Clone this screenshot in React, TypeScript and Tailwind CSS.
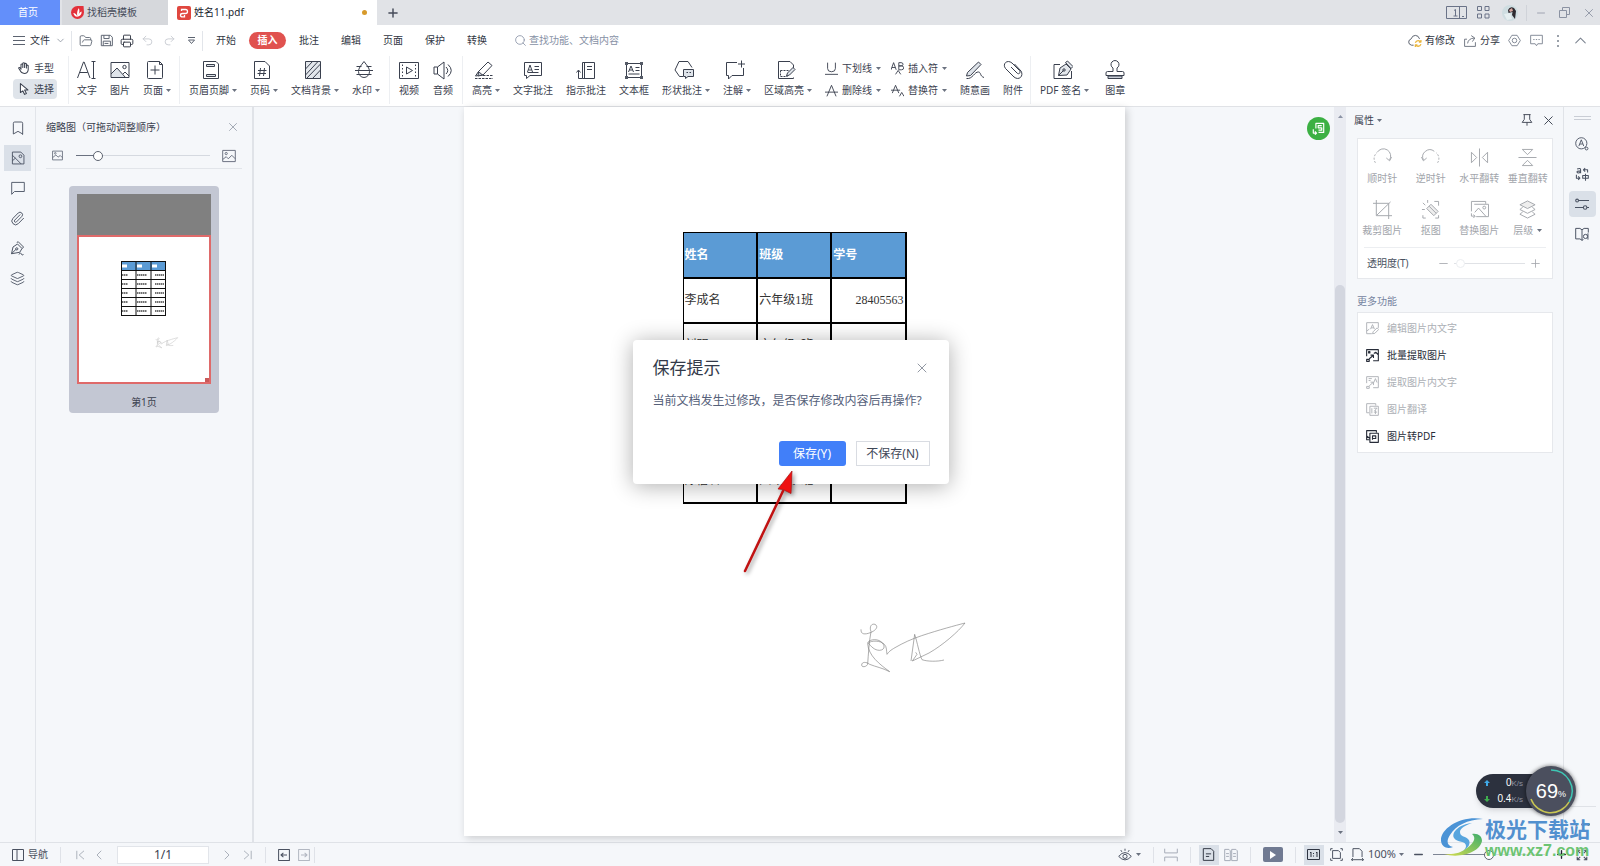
import { type ReactNode, useState } from 'react';
import {
  Bookmark,
  ChevronDown,
  ChevronLeft,
  ChevronRight,
  ChevronUp,
  FolderOpen,
  Layers,
  Minus,
  Paperclip,
  Plus,
  Printer,
  Redo2,
  Search,
  Undo2,
  X,
} from 'lucide-react';

type IconProps = {
  children: ReactNode;
  className?: string;
};

// All hand-drawn icons share a 20x20 grid.
function Icon({ children, className = 'size-5' }: IconProps) {
  return (
    <svg
      viewBox="0 0 20 20"
      className={`shrink-0 ${className}`}
      fill="none"
      stroke="currentColor"
      strokeLinejoin="round"
      aria-hidden="true"
    >
      {children}
    </svg>
  );
}

function Caret() {
  return (
    <svg viewBox="0 0 5 3" className="h-[3px] w-[5px] shrink-0" fill="#6b7280" aria-hidden="true">
      <path d="M0 0h5L2.5 3z" />
    </svg>
  );
}

function Divider() {
  return <span className="h-4 w-px shrink-0 bg-[#dfe2e8]" />;
}

type Tool = {
  label: string;
  caret?: boolean;
  icon: ReactNode;
};

const pageTools: Tool[] = [
  {
    label: '文字',
    icon: <path d="M.5 18 6.5 2h.6L13 18M2.800 12.5h8M14.500 1.5h4M16.500 1.5v17M14.500 18.500h4" />,
  },
  {
    label: '图片',
    icon: (
      <>
        <path d="M1.500 13 7 8l8 9.500H1.500z" fill="#dfe4ea" stroke="none" />
        <path d="M1 2.500h18v15H1zM1 14l6-6 8.500 9.500M13 14l2-2 4 4" />
        <circle cx="14.500" cy="7" r="1.700" />
      </>
    ),
  },
  {
    label: '页面',
    caret: true,
    icon: (
      <>
        <path d="M2.500 2.500q0-1 1-1h11l3 3v13q0 1-1 1h-13q-1 0-1-1zM14.500 1.500v3h3" />
        <path d="M10 5.500v9M5.500 10h9" />
      </>
    ),
  },
];

const layoutTools: Tool[] = [
  {
    label: '页眉页脚',
    caret: true,
    icon: (
      <>
        <path d="M2.500 1.500h12.500l2.500 2.500v14.500h-15z" />
        <path d="M5.500 4.500h8v2h-8zM5.500 14.500h9v2h-9z" fill="#dfe4ea" />
      </>
    ),
  },
  {
    label: '页码',
    caret: true,
    icon: (
      <>
        <path d="M2.500 1.500h10.500l4.500 4.500v12.500h-15z" />
        <path d="m8.500 8-1 8M12.500 8l-1 8M6 10.500h8.500M5.500 13.500h8.500" />
      </>
    ),
  },
  {
    label: '文档背景',
    caret: true,
    icon: (
      <>
        <path d="M2.500 1.500h15v17h-15z" fill="#e3e7ec" />
        <path d="m2.500 9 7-7.500M2.500 15 15 1.500M3.500 18.500l14-14.500M9.500 18.500l8-8.500" />
      </>
    ),
  },
  {
    label: '水印',
    caret: true,
    icon: (
      <>
        <path d="M10 1.500c3 4 5.500 6.500 5.500 10a5.500 6 0 0 1-11 0c0-3.500 2.500-6 5.500-10z" />
        <path d="M2.500 6.500h5M12.500 6.500h5M1 10.500h18M2.500 14.500h15" />
      </>
    ),
  },
];

const mediaTools: Tool[] = [
  {
    label: '视频',
    icon: (
      <>
        <path d="M.500 2.500h19v16H.500zM7.500 7v7l6-3.500z" />
        <path d="M3.500 4.500v12M16.500 4.500v12" strokeDasharray="1.500 2" />
      </>
    ),
  },
  {
    label: '音频',
    icon: (
      <path d="M1 7h3.500L11 2v17l-6.500-5H1zM4.500 7v7M13 7q3.500 3.500 0 7M15 4.500q6.500 6 0 12" />
    ),
  },
];

const markTools: Tool[] = [
  {
    label: '高亮',
    caret: true,
    icon: (
      <>
        <path d="M4.500 11.500 14 2l4 3.500-9 9.500-4.500-.500zM4.500 11.500 1.500 16l7-1" />
        <path d="m4.500 11.500 4 3.500L4 16z" fill="#c9ced8" />
        <path d="M1 18.500h18M9 15.500h10" strokeDasharray="2.500 1" />
      </>
    ),
  },
  {
    label: '文字批注',
    icon: (
      <path d="M1.500 2.500h17v13H7L3.500 18.500v-3h-2zM4.500 12l2.500-7 2.500 7M5.500 10h3M11.500 6.500h4.500M11.500 9.500h4.500M4.500 12.500h11" />
    ),
  },
  {
    label: '指示批注',
    icon: <path d="M6.500 2.500h12v16h-12zM8.500 2.500v16M11 6.500h5M11 9.500h5M6.500 18.500h-4v-8M.500 12.500l2-2.500 2 2.500" />,
  },
  {
    label: '文本框',
    icon: (
      <>
        <path d="M2.500 3.500h15v14h-15zM4.500 12 7 6l2.500 6M5.500 10h3M11.500 7.500h4M11.500 10.500h4M4.500 14h11" />
        <path
          d="M1 2h3v3H1zM16 2h3v3h-3zM1 16h3v3H1zM16 16h3v3h-3z"
          fill="#555b67"
          stroke="none"
        />
      </>
    ),
  },
  {
    label: '形状批注',
    caret: true,
    icon: (
      <>
        <path d="M9 16.500H5.500L1 10l4-8.500h9l4 6" />
        <path d="M9.500 9.500h10v7H14L11.500 18.500v-2h-2z" fill="#dfe4ea" />
        <path d="M12.500 12.500h1.500M15.500 12.500h1.500" />
      </>
    ),
  },
  {
    label: '注解',
    caret: true,
    icon: <path d="M12 2.500H1.500v13h2v3.500L7 15.500h11.500V8M16.500 .500v7M13 4h7" />,
  },
  {
    label: '区域高亮',
    caret: true,
    icon: (
      <>
        <path d="M17.500 8V5L14 1.500H2.500v17h15v-1" />
        <path d="M4.500 10.500h8M4.500 10.500v6h7" strokeDasharray="2 1" />
        <path d="m10.500 16 1-3L17 7.500l2 2-5.500 5.500z" fill="#dfe4ea" />
      </>
    ),
  },
];

const drawTools: Tool[] = [
  {
    label: '随意画',
    icon: (
      <>
        <path d="m2.500 12.500 11-10.500 2.500 2.500-10.500 11-4 .500z" fill="#dfe4ea" />
        <path d="M1.500 18.500c6 1 8-7 12-6.500 3 .500 1 4 5.500 5.500" />
      </>
    ),
  },
  {
    label: '附件',
    icon: (
      <path d="m8 7 6 6c2 2 4-.500 2.500-2.500L9 3C4 -1-1 4 2.500 8.500l8.500 8.500c5 4 10-1 7-6L11.500 4" />
    ),
  },
];

const signTools: Tool[] = [
  {
    label: 'PDF 签名',
    caret: true,
    icon: (
      <>
        <path d="M7 4.500H1v14h17.500V11" />
        <path d="M5.500 15.500 7 8l6-4 5 5-4 6zM12.500 2.500 14.500 1 20 6.500 18 8.500z" fill="#e3e7ec" />
        <path d="m5.500 15.500 5-5" />
        <circle cx="11" cy="10" r="1.200" />
      </>
    ),
  },
  {
    label: '图章',
    icon: (
      <>
        <path d="M3 16h14v2.500H3z" fill="#c9ced8" />
        <path d="M8 11.500V8a4 4 0 1 1 4 0v3.500h5.500q1.500 0 1.500 1.500v2.500H1V13q0-1.500 1.500-1.500z" />
      </>
    ),
  },
];

function ToolButton({ tool }: { tool: Tool }) {
  return (
    <button type="button" className="flex flex-col items-start gap-[3px]">
      <span className={tool.caret ? 'flex w-full justify-center pr-1' : 'flex w-full justify-center'}>
        <Icon>{tool.icon}</Icon>
      </span>
      <span className="flex h-[14px] items-center gap-[3px] whitespace-nowrap">
        {tool.label}
        {tool.caret ? <Caret /> : null}
      </span>
    </button>
  );
}

function SmallTool({ tool }: { tool: Tool }) {
  return (
    <button type="button" className="flex h-[22px] items-center gap-1 whitespace-nowrap">
      <Icon className="size-[13px]">{tool.icon}</Icon>
      {tool.label}
      <Caret />
    </button>
  );
}

const lineTools: Tool[] = [
  { label: '下划线', icon: <path strokeWidth="1.400" d="M4 1v9q0 5 6 5t6-5V1M0 19h20" /> },
  { label: '删除线', icon: <path strokeWidth="1.400" d="M3 19 10 2l7 17M0 12.500h20" /> },
];

const caretTools: Tool[] = [
  {
    label: '插入符',
    icon: (
      <path
        strokeWidth="1.400"
        d="m0 12 4-11 4 11M1.500 8.500h5M12 1h3.500q3 0 3 2.500t-3 2.500H12zM12 6h4q3.500 0 3.500 3t-3.500 3h-4zM7 19l4-6 4 6"
      />
    ),
  },
  {
    label: '替换符',
    icon: <path strokeWidth="1.400" d="m2 14 5-12 5 12M0 9.500h14M13 19l3.500-6 3.500 6" />,
  },
];

function TitleBar() {
  return (
    <header className="flex h-[25px] shrink-0 items-stretch bg-[#e1e3e7] text-[#454b59]">
      <button type="button" className="w-[60px] bg-[#638ffa] pr-1 text-white">
        首页
      </button>
      <button type="button" className="ml-0.5 flex w-[106px] items-center gap-[3px] bg-[#d6d8dc] pl-[9px]">
        <svg viewBox="0 0 14 14" className="size-[13px]" aria-hidden="true">
          <path d="M7 0h6.500L14 7a7 7 0 1 1-7-7z" fill="#e3313b" />
          <path
            d="M7 11.500C6 8 7 4 8.500 2.500c1 2.500.500 5-.500 7 1-2 2-3 3.500-3.500 0 3-1.500 5-4.500 5.500-3 0-4-2-4.500-4 2 .300 3.500 1.500 4.500 4z"
            fill="#fff"
          />
        </svg>
        找稻壳模板
      </button>
      <button type="button" className="flex w-[209px] items-center gap-[3px] bg-white pr-[10px] pl-[9px] text-[#20242e]">
        <svg viewBox="0 0 14 14" className="size-[14px]" aria-hidden="true">
          <rect width="14" height="14" rx="2" fill="#e0473f" />
          <path
            d="M4.500 5V3.500h4q2 0 2 2t-2 2H5.500q-2 0-2 1.700t2 1.700h2V9"
            fill="none"
            stroke="#fff"
            strokeWidth="1.300"
          />
        </svg>
        姓名11.pdf
        <span className="ml-auto size-[5px] rounded-full bg-[#d79a2b]" />
      </button>
      <button type="button" aria-label="新建标签" className="flex w-[31px] items-center justify-center">
        <Plus size={14} strokeWidth={2.5} />
      </button>
      <div className="ml-auto flex items-center pr-1 text-[#6a7388]">
        <svg viewBox="0 0 21 13" className="h-[13px] w-[21px]" fill="none" stroke="currentColor" aria-hidden="true">
          <path d="M.500.500h20v12H.500zM13.500 1v11M8 4.500l1.500-1V10M7.500 10h4M16 10.500h2" />
        </svg>
        <button type="button" aria-label="应用" className="ml-2.5">
          <svg viewBox="0 0 13 13" className="size-[13px]" fill="none" stroke="currentColor" aria-hidden="true">
            <path d="M.500.500h4v4h-4zM8 .500h4v4H8zM.500 8h4v4h-4zM8 8h4v4H8z" />
          </svg>
        </button>
        <svg viewBox="0 0 16 16" className="ml-3 size-4" aria-hidden="true">
          <circle cx="8" cy="8" r="8" fill="#cfdde1" />
          <path d="M6 5q2-4 6-2l2 3-1 8-3-4 .500-3-4 1z" fill="#2e2a30" />
          <path d="m7 5 3-2 1 3-3 1z" fill="#d8a7a0" />
          <path d="m2 9 6-1 2 6-5 1z" fill="#e6eff1" />
        </svg>
        <span className="ml-2 h-4 w-px bg-[#d0d3d9]" />
        <div className="ml-2 flex items-center gap-3 text-[#8b92a2]">
          <button type="button" aria-label="最小化">
            <Minus size={12} strokeWidth={1.5} />
          </button>
          <button type="button" aria-label="还原">
            <svg viewBox="0 0 11 11" className="size-[11px]" fill="none" stroke="currentColor" aria-hidden="true">
              <path d="M.500 3.500h7v7h-7zM3.500 3.500v-3h7v7h-3" />
            </svg>
          </button>
          <button type="button" aria-label="关闭">
            <X size={14} strokeWidth={1.5} />
          </button>
        </div>
      </div>
    </header>
  );
}

const menuTabs = ['批注', '编辑', '页面', '保护', '转换'];

function MenuRow() {
  return (
    <nav className="flex h-[31px] shrink-0 items-center bg-white pr-2.5 pl-[13px] text-[#2f3542]">
      <button type="button" className="flex items-center">
        <svg viewBox="0 0 12 9" className="h-[9px] w-3" stroke="#5c6370" aria-hidden="true">
          <path d="M0 .500h12M0 4.500h12M0 8.500h12" />
        </svg>
        <span className="ml-[5px]">文件</span>
        <ChevronDown size={11} strokeWidth={1.8} className="ml-[5px] text-[#8d94a0]" />
      </button>
      <span className="mr-[7px] ml-[5px] h-5 w-px bg-[#e2e5ea]" />
      <div className="flex items-center gap-[7px] text-[#5c6370]">
        <button type="button" aria-label="打开">
          <FolderOpen size={14} strokeWidth={1.5} />
        </button>
        <button type="button" aria-label="保存">
          <Icon className="size-[13px]">
            <path strokeWidth="1.500" d="M2 2h14l3 3v13H2zM6 2v5h8V2M5 18v-7h11v7M7 14.500h6" />
          </Icon>
        </button>
        <button type="button" aria-label="打印" className="text-[#2f3542]">
          <Printer size={14} strokeWidth={1.6} />
        </button>
        <button type="button" aria-label="撤销" className="text-[#c5c9d0]">
          <Undo2 size={13} strokeWidth={1.6} />
        </button>
        <button type="button" aria-label="恢复" className="ml-0.5 text-[#c5c9d0]">
          <Redo2 size={13} strokeWidth={1.6} />
        </button>
        <button type="button" aria-label="自定义快速访问工具栏" className="ml-[5px]">
          <svg viewBox="0 0 7 7" className="size-[7px]" fill="none" stroke="currentColor" aria-hidden="true">
            <path d="M0 .500h7M.500 3 3.500 6.500 6.500 3z" />
          </svg>
        </button>
      </div>
      <span className="mr-[13px] ml-[7px] h-5 w-px bg-[#e2e5ea]" />
      <button type="button">开始</button>
      <button type="button" className="ml-[13px] h-[17px] w-[37px] rounded-full bg-[#e0524f] font-bold text-white">
        插入
      </button>
      <div className="ml-[13px] flex gap-[22px]">
        {menuTabs.map((tab) => (
          <button key={tab} type="button">
            {tab}
          </button>
        ))}
      </div>
      <label className="ml-[27px] flex items-center gap-0.5 text-[#8791a5]">
        <Search size={13} strokeWidth={1.5} />
        <input
          type="text"
          aria-label="查找功能"
          placeholder="查找功能、文档内容"
          className="w-28 bg-transparent outline-none placeholder:text-[#8791a5]"
        />
      </label>
      <div className="ml-auto flex items-center text-[#2f3542]">
        <button type="button" className="flex items-center gap-[3px]">
          <Icon className="size-[14px]">
            <path strokeWidth="1.400" stroke="#5c6370" d="M8 16H5q-4-1-4-4.500T4.500 7Q6 2 10.500 2t6 5" />
            <path
              strokeWidth="1.800"
              stroke="#e9b53c"
              d="M10.500 12.500q1-3 4-3 2.500 0 3.500 2M18.500 8.500v3h-3M18.500 14.500q-1 3-4 3-2.500 0-3.500-2M10.500 18.500v-3h3"
            />
          </Icon>
          有修改
        </button>
        <button type="button" className="ml-[9px] flex items-center gap-1">
          <Icon className="size-3 text-[#5c6370]">
            <path strokeWidth="1.400" d="M5 7H1v12h18v-7M6 14q1-8 11-9M12 1l6 4-4 6" />
          </Icon>
          分享
        </button>
        <div className="ml-2 flex items-center text-[#7b828f]">
          <button type="button" aria-label="设置">
            <Icon className="size-[13px]">
              <path strokeWidth="1.400" d="M6 2h8l1.500 2.500 3.500 5.500-3.500 5.500L14 18H6l-1.500-2.500L1 10l3.500-5.500z" />
              <circle cx="10" cy="10" r="3.500" strokeWidth="1.400" />
            </Icon>
          </button>
          <button type="button" aria-label="反馈" className="ml-[9px]">
            <Icon className="size-[13px]">
              <path strokeWidth="1.400" d="M1 2h18v13h-7l-2 3-2-3H1zM5 8.500h2M9 8.500h2M13 8.500h2" />
            </Icon>
          </button>
          <button type="button" aria-label="更多" className="ml-3.5">
            <svg viewBox="0 0 2 12" className="h-3 w-0.5" fill="currentColor" aria-hidden="true">
              <path d="M.250 0h1.500v2H.250zM.250 5h1.500v2H.250zM.250 10h1.500v2H.250z" />
            </svg>
          </button>
          <button type="button" aria-label="收起功能区" className="ml-3">
            <ChevronUp size={19} strokeWidth={1.3} />
          </button>
        </div>
      </div>
    </nav>
  );
}

function Ribbon() {
  return (
    <div className="flex h-[51px] shrink-0 items-start border-b border-[#e0e2e6] bg-white text-[#3a404e]">
      <div className="ml-[13px] flex w-11 flex-col pt-px">
        <button type="button" className="flex h-[22px] items-center gap-1 pl-[5px]">
          <Icon className="size-3">
            <path
              strokeWidth="1.700"
              d="M5 11V4q1.500-1.500 3 0v5-7q1.500-1.500 3 0v7-6q1.500-1.500 3 0v7-4q1.500-1.500 3 0v7q-1 6-6.500 6-5 0-7-5l-2.500-4q1-2 3 0l1 2z"
            />
          </Icon>
          手型
        </button>
        <button type="button" className="flex h-5 items-center gap-1 rounded-sm bg-[#dfe4ea] pl-[5px]">
          <Icon className="size-3">
            <path strokeWidth="1.700" d="M4 1v15l4-3 3 6 3-1.500-3-6h5.500z" fill="#fff" />
          </Icon>
          选择
        </button>
      </div>
      <div className="ml-[11px] flex h-12 gap-[13px] border-l border-[#edeff2] px-2 pt-1">
        {pageTools.map((tool) => (
          <ToolButton key={tool.label} tool={tool} />
        ))}
      </div>
      <div className="flex h-12 gap-[13px] border-l border-[#edeff2] px-[9px] pt-1">
        {layoutTools.map((tool) => (
          <ToolButton key={tool.label} tool={tool} />
        ))}
      </div>
      <div className="flex h-12 gap-[14px] border-l border-[#edeff2] px-[9px] pt-1">
        {mediaTools.map((tool) => (
          <ToolButton key={tool.label} tool={tool} />
        ))}
      </div>
      <div className="flex h-12 gap-[13px] border-l border-[#edeff2] pr-[7px] pl-[9px] pt-1">
        {markTools.map((tool) => (
          <ToolButton key={tool.label} tool={tool} />
        ))}
        <div className="-mt-1 flex gap-[10px] pt-px">
          <div className="flex flex-col">
            {lineTools.map((tool) => (
              <SmallTool key={tool.label} tool={tool} />
            ))}
          </div>
          <div className="flex flex-col">
            {caretTools.map((tool) => (
              <SmallTool key={tool.label} tool={tool} />
            ))}
          </div>
        </div>
        {drawTools.map((tool) => (
          <ToolButton key={tool.label} tool={tool} />
        ))}
      </div>
      <div className="flex h-12 gap-4 border-l border-[#edeff2] px-[9px] pt-1">
        {signTools.map((tool) => (
          <ToolButton key={tool.label} tool={tool} />
        ))}
      </div>
    </div>
  );
}

const railItems = [
  { label: '书签', icon: <Bookmark size={16} strokeWidth={1.4} /> },
  {
    label: '缩略图',
    icon: (
      <Icon className="size-[14px]">
        <path strokeWidth="1.300" d="M2 1.500h12l4.500 4.500v12.500H2zM2 6l12.500 12.500M2 14l4.500-4" />
        <circle cx="13.500" cy="7.500" r="2" strokeWidth="1.300" />
      </Icon>
    ),
  },
  {
    label: '批注',
    icon: (
      <Icon className="size-[14px]">
        <path strokeWidth="1.300" d="M1 2h18v13H5l-4 4z" />
      </Icon>
    ),
  },
  { label: '附件', icon: <Paperclip size={15} strokeWidth={1.5} /> },
  {
    label: '签名',
    icon: (
      <Icon className="size-[15px]">
        <path strokeWidth="1.300" d="M2 17 4 8l6-4 6 6-3 5zM9 2l2-1 7 7-1.500 2M2 17l6-6M12 18q2-4 3-1t3 1" />
        <circle cx="9" cy="10.500" r="1.500" strokeWidth="1.300" />
      </Icon>
    ),
  },
  { label: '图层', icon: <Layers size={15} strokeWidth={1.4} /> },
];

function LeftRail() {
  return (
    <div className="flex w-9 shrink-0 flex-col items-center gap-1 border-r border-[#e2e5ea] pt-2 text-[#4a5262]">
      {railItems.map((item) => (
        <button
          key={item.label}
          type="button"
          aria-label={item.label}
          className={
            item.label === '缩略图'
              ? 'flex h-[26px] w-[27px] items-center justify-center bg-[#dae0e8]'
              : 'flex h-[26px] w-[27px] items-center justify-center'
          }
        >
          {item.icon}
        </button>
      ))}
    </div>
  );
}

const SIGNATURE =
  'M422 568c-1 16 12 16 28 10 20-8 24-20 14-25-10-3-18 6-12 22-6 30-8 70-10 98-4 8-18 10-18 2 0-10 14-10 24-2 20 8 36 10 60 22-30-22-64-48-66-84-2-10 24-18 40-6 12 10 14 24-4 26-16 0-26-12-34-22 8-8 38-8 48 4 8 8 6 20 8 30 6-8 10-12 24-20 24-14 50-26 80-36 54-18 100-30 130-38-20 26-66 66-108 90l-50 24 14-20-4-6M572 663l11-80c8 24 14 60 22 76 16 6 48 6 66 1';

const miniRows = [1, 2, 3, 4, 5];

function ThumbnailPanel() {
  const [zoom, setZoom] = useState(14);

  return (
    <aside className="w-[218px] shrink-0 border-r-2 border-[#e0e3e8] px-[10px] text-[#3a404e]">
      <div className="flex h-10 items-center justify-between pr-0.5">
        <h2>缩略图（可拖动调整顺序）</h2>
        <button type="button" aria-label="关闭缩略图" className="text-[#9299a6]">
          <X size={14} strokeWidth={1.4} />
        </button>
      </div>
      <div className="flex h-[22px] items-center justify-between border-b border-[#e2e5ea] px-1.5 pb-1 text-[#6a7180]">
        <Icon className="size-[11px]">
          <path strokeWidth="1.600" d="M1 2h18v16H1zM1 14l6-5 4 4 4-3 4 4" />
          <circle cx="6" cy="6" r="1.500" strokeWidth="1.500" />
        </Icon>
        <input
          type="range"
          aria-label="缩略图大小"
          value={zoom}
          onChange={(event) => setZoom(Number(event.target.value))}
          className="h-[11px] w-[134px] appearance-none bg-[linear-gradient(90deg,#6a7180_17%,#d5d9e0_17%)] bg-[length:100%_1px] bg-center bg-no-repeat [&::-webkit-slider-thumb]:size-[10px] [&::-webkit-slider-thumb]:appearance-none [&::-webkit-slider-thumb]:rounded-full [&::-webkit-slider-thumb]:border [&::-webkit-slider-thumb]:border-[#5c6370] [&::-webkit-slider-thumb]:bg-white"
        />
        <Icon className="size-[14px]">
          <path strokeWidth="1.400" d="M1 2h18v16H1zM1 15l5-4 3 3 5-5 5 5" />
          <circle cx="6" cy="6.500" r="1.600" strokeWidth="1.400" />
        </Icon>
      </div>
      <figure className="mx-auto mt-[17px] w-[150px] rounded-sm bg-[#c3c7d3] px-2 pt-2">
        <div className="h-[41px] bg-[#808080]" />
        <div className="border-2 border-[#df6a6a] bg-white">
          <svg viewBox="0 0 130 145" className="block h-[145px] w-full" aria-hidden="true">
            <rect x="42" y="24" width="45" height="9" fill="#5b9bd5" />
            <path d="M43 29h5M58 29h5M73 29h5" stroke="#fff" strokeWidth="3" />
            {miniRows.map((row) => (
              <path
                key={row}
                d={`M43 ${29 + row * 9}h6M58 ${29 + row * 9}h10M76 ${29 + row * 9}h9`}
                stroke="#444"
                strokeWidth="1.500"
                strokeDasharray="1.500 .5"
              />
            ))}
            <path
              d="M42 24.500h45M42 33.500h45M42 42.500h45M42 51.500h45M42 60.500h45M42 69.500h45M42 78.500h45M42.500 24v55M57 24v55M72 24v55M86.500 24v55"
              stroke="#111"
              strokeWidth="1"
            />
            <g transform="translate(76 100) scale(.07) translate(-410 -540)">
              <path d={SIGNATURE} fill="none" stroke="#ccc" strokeWidth="9" />
            </g>
            <path d="M126 145v-4h4v4z" fill="#c95a5a" />
          </svg>
        </div>
        <figcaption className="pt-2 pb-px text-center leading-[20px]">第1页</figcaption>
      </figure>
    </aside>
  );
}

// Rows without data stay blank in the sheet.
const students = [
  { id: 1, name: '李成名', grade: '六年级1班', code: '28405563' },
  { id: 2, name: '刘明', grade: '六年级2班', code: '28405564' },
  { id: 3, name: '', grade: '', code: '' },
  { id: 4, name: '', grade: '', code: '' },
  { id: 5, name: '陈信名', grade: '六年级1班', code: '68161781' },
];

function SaveDialog() {
  return (
    <div
      role="dialog"
      aria-labelledby="save-title"
      className="absolute top-[233px] left-[169px] w-[316px] rounded-[4px] bg-white pt-4 pr-[19px] pb-[18px] pl-5 shadow-[0_2px_22px_rgba(0,0,0,0.32)]"
    >
      <div className="flex h-6 items-center justify-between">
        <h2 id="save-title" className="text-[17px] text-[#333a4a]">
          保存提示
        </h2>
        <button type="button" aria-label="关闭" className="text-[#8a909c]">
          <X size={16} strokeWidth={1.4} />
        </button>
      </div>
      <p className="mt-3 text-xs leading-[18px] whitespace-nowrap text-[#56617a]">
        当前文档发生过修改，是否保存修改内容后再操作?
      </p>
      <div className="mt-[31px] flex justify-end gap-[10px] text-xs">
        <button type="button" className="h-[25px] w-[67px] rounded-[3px] bg-[#417ff9] text-white">
          保存(Y)
        </button>
        <button type="button" className="h-[25px] w-[74px] border border-[#d9dce2] bg-white text-[#3f4757]">
          不保存(N)
        </button>
      </div>
    </div>
  );
}

function DocumentPage() {
  return (
    <article className="relative mb-1.5 w-[661px] bg-white pt-[125px] shadow-[2px_2px_8px_rgba(0,0,0,0.18)]">
      <table className="ml-[219px] w-[224px] table-fixed border-collapse border-t border-l border-black text-xs text-[#333]">
        <thead className="bg-[#5b9bd5] text-white">
          <tr className="h-[45px]">
            {['姓名', '班级', '学号'].map((title) => (
              <th key={title} className="border-r-2 border-b-2 border-black px-px text-left font-bold">
                {title}
              </th>
            ))}
          </tr>
        </thead>
        <tbody className="font-['Liberation_Serif','Noto_Sans_CJK_SC',serif]">
          {students.map((student) => (
            <tr key={student.id} className="h-[45px]">
              <td className="border-r-2 border-b-2 border-black px-px">{student.name}</td>
              <td className="border-r-2 border-b-2 border-black px-px">{student.grade}</td>
              <td className="border-r-2 border-b-2 border-black px-px text-right">{student.code}</td>
            </tr>
          ))}
        </tbody>
      </table>
      <svg
        viewBox="410 540 342 171"
        className="absolute top-[513px] left-[393px] h-[57px] w-[114px]"
        fill="none"
        stroke="#777"
        strokeWidth="1.800"
        aria-hidden="true"
      >
        <path d={SIGNATURE} />
      </svg>
      <SaveDialog />
      <svg
        viewBox="0 0 60 110"
        className="absolute top-[360px] left-[277px] h-[110px] w-[60px] drop-shadow-[2px_2px_2px_rgba(0,0,0,0.4)]"
        aria-hidden="true"
      >
        <path d="M4 104 42 24" stroke="#c11212" strokeWidth="2.500" strokeLinecap="round" />
        <path d="M51 4 37 22l5 .500 8 4z" fill="#ee1111" stroke="#a80f0f" strokeWidth=".700" />
      </svg>
    </article>
  );
}

const pictureTools: Tool[] = [
  {
    label: '顺时针',
    icon: (
      <>
        <path d="M2.500 15.500A8 8 0 0 1 4 5" strokeDasharray="2 1.500" />
        <path d="M4.500 4.500a7.500 7.500 0 0 1 13 8M14 10.500l3.500 3 2-4" />
      </>
    ),
  },
  {
    label: '逆时针',
    icon: (
      <>
        <path d="M17.500 15.500A8 8 0 0 0 16 5" strokeDasharray="2 1.500" />
        <path d="M14 3.500a7.500 7.500 0 0 0-11.500 9M6 10.500l-3.500 3-2-4" />
      </>
    ),
  },
  { label: '水平翻转', icon: <path d="M10 .500v19M1.500 4.500v11L7 10zM18.500 4.500v11L13 10z" /> },
  { label: '垂直翻转', icon: <path d="M.500 10h19M4.500 1.500h11L10 7zM4.500 18.500h11L10 13z" /> },
  { label: '裁剪图片', icon: <path d="M3.500 0v16.500H20M0 3.500h16.500V20M4 16 18.500 2" /> },
  {
    label: '抠图',
    icon: (
      <>
        <path d="m6 9 4.500-4.500 7.500 7.500-4.500 4.500zM8.500 6.500l7.500 7.500" fill="#eee" />
        <path d="M14 1.500h4.500V6M18.500 16v3H15M1 10h3M2 3l2.500 2.500M7 0v3M2 16v3h3" />
      </>
    ),
  },
  {
    label: '替换图片',
    icon: (
      <>
        <path d="M4.500 4.500h15v13h-13M1.500 12V1.500h15V4M5 13l4-4.500 8 9M1.500 14v3h3.500M3.500 15.500l2 1.500-2 2" />
        <circle cx="15" cy="8" r="1.500" />
      </>
    ),
  },
  {
    label: '层级',
    caret: true,
    icon: (
      <>
        <path d="m10 1 8 4-8 4-8-4z" fill="#eee" />
        <path d="m5 7.500-3 2.500 8 4 8-4-3-2.500M5 12.500 2 15l8 4 8-4-3-2.500" />
      </>
    ),
  },
];

const moreFeatures = [
  {
    label: '编辑图片内文字',
    enabled: false,
    icon: <path strokeWidth="1.400" d="M9 18H1V1h18v8M1 14l4-3M7 11l3-7 3 7M8 9h4M10 18l1-3 6-6 2.500 2.500-6 6z" />,
  },
  {
    label: '批量提取图片',
    enabled: true,
    icon: <path strokeWidth="1.700" d="M1 11V1h18v17h-8M1 16h4v3H1zM5 15l6-5M7 9.500h4.500V14M12 7l3-2 4 4M4 4h2v2H4z" />,
  },
  {
    label: '提取图片内文字',
    enabled: false,
    icon: <path strokeWidth="1.400" d="M1 11V1h18v17h-8M1 16h4v3H1zM5 15l6-5M7 9.500h4.500V14M4 4h5M4 7h3M12 10l2.500-6L17 10" />,
  },
  {
    label: '图片翻译',
    enabled: false,
    icon: <path strokeWidth="1.400" d="M15 4V1H1v14h4M6 5h13v14H6zM9 8v8M12 8h5l-4 4M12 14h5M14.500 11v6" />,
  },
  {
    label: '图片转PDF',
    enabled: true,
    icon: <path strokeWidth="1.700" d="M16 4V1H1v14h4M6 5h13v14H6zM1 9l5 4M10 15V9h5v4h-5" />,
  },
];

function PropertiesPanel() {
  const [opacity, setOpacity] = useState(4);

  return (
    <aside className="w-[218px] shrink-0 border-r border-[#e0e3e8] pr-[10px] pl-[11px] text-[#3a404e]">
      <div className="-mx-[3px] flex h-[31px] items-center justify-between pb-[9px] pt-1">
        <button type="button" className="flex items-center gap-[3px]">
          属性
          <Caret />
        </button>
        <div className="flex items-center gap-2">
          <button type="button" aria-label="固定">
            <Icon className="size-3">
              <path strokeWidth="1.500" d="M4 1h12M5.500 1v8L2 14h16l-3.500-5V1M10 14v5.500" />
            </Icon>
          </button>
          <button type="button" aria-label="关闭属性">
            <X size={15} strokeWidth={1.5} />
          </button>
        </div>
      </div>
      <section className="border border-[#e6e8ec] bg-white px-1.5 text-[#a2a5ab]">
        <div className="-mx-1.5 grid grid-cols-4 gap-y-3 pt-[9px] pb-[7px]">
          {pictureTools.map((tool) => (
            <button key={tool.label} type="button" className="flex flex-col items-center gap-px">
              <Icon className="size-[19px]">{tool.icon}</Icon>
              <span className="flex h-5 items-center gap-1 leading-5 whitespace-nowrap">
                {tool.label}
                {tool.caret ? <Caret /> : null}
              </span>
            </button>
          ))}
        </div>
        <div className="flex h-[31px] items-center border-t border-[#eceef1] pr-1 pl-[3px]">
          <label htmlFor="opacity" className="w-[70px] text-[#4a5160]">
            透明度(T)
          </label>
          <Minus size={13} strokeWidth={1.5} />
          <input
            id="opacity"
            type="range"
            value={opacity}
            onChange={(event) => setOpacity(Number(event.target.value))}
            className="mx-1 h-[11px] min-w-0 flex-1 appearance-none bg-[linear-gradient(#e0e2e6,#e0e2e6)] bg-[length:100%_1px] bg-center bg-no-repeat [&::-webkit-slider-thumb]:size-[9px] [&::-webkit-slider-thumb]:appearance-none [&::-webkit-slider-thumb]:rounded-full [&::-webkit-slider-thumb]:border [&::-webkit-slider-thumb]:border-[#eceef1] [&::-webkit-slider-thumb]:bg-white"
          />
          <Plus size={13} strokeWidth={1.5} />
        </div>
      </section>
      <h3 className="mt-[14px] leading-[16px] text-[#7684a0]">更多功能</h3>
      <ul className="mt-[3px] border border-[#e6e8ec] bg-white py-0.5 pl-2">
        {moreFeatures.map((feature) => (
          <li key={feature.label}>
            <button
              type="button"
              disabled={!feature.enabled}
              className="flex h-[27px] items-center gap-2 text-[#272c38] disabled:text-[#acafb5]"
            >
              <Icon className="size-[13px]">{feature.icon}</Icon>
              {feature.label}
            </button>
          </li>
        ))}
      </ul>
    </aside>
  );
}

const sideTools = [
  {
    label: '查找',
    icon: (
      <>
        <circle cx="9" cy="9" r="8" strokeWidth="1.300" />
        <circle cx="16.500" cy="16.500" r="2" strokeWidth="1.300" />
        <path strokeWidth="1.300" d="m5.500 13 3.500-9 3.500 9M7 10h4" />
      </>
    ),
  },
  {
    label: '翻译',
    icon: (
      <path
        strokeWidth="1.500"
        d="M3 3q5-2 5 1v5M8 5.500q-6 0-5 2t5 0M12 4h6v4M14.500 1.500 12 4l2.500 2.500M2 11v5h5M4.500 13.500 7 16l-2.500 2.500M11 12h8v4h-8zM15 9.500v10"
      />
    ),
  },
  {
    label: '属性',
    icon: (
      <>
        <path strokeWidth="1.500" d="M5 5h15M0 15h12M17 15h3" />
        <circle cx="3" cy="5" r="2" strokeWidth="1.500" />
        <circle cx="14.500" cy="15" r="2.500" strokeWidth="1.500" />
      </>
    ),
  },
  {
    label: '阅读',
    icon: (
      <>
        <path strokeWidth="1.400" d="M10 4 7 2H1v15h6l3 2zM10 4l3-2h6v6M10 19l2-1" />
        <circle cx="15" cy="13.500" r="3" strokeWidth="1.400" />
        <path strokeWidth="1.400" d="M18.500 9v9" />
      </>
    ),
  },
];

function RightRail() {
  return (
    <div className="flex w-9 shrink-0 flex-col items-center text-[#4a5262]">
      <span className="mt-[9px] h-1 w-[17px] border-y border-[#c9cdd5]" />
      <div className="mt-[11px] flex flex-col gap-1">
        {sideTools.map((tool) => (
          <button
            key={tool.label}
            type="button"
            aria-label={tool.label}
            className={
              tool.label === '属性'
                ? 'flex h-[26px] w-[27px] items-center justify-center rounded-sm bg-[#dae0e8]'
                : 'flex h-[26px] w-[27px] items-center justify-center'
            }
          >
            <Icon className="size-[14px]">{tool.icon}</Icon>
          </button>
        ))}
      </div>
      <button
        type="button"
        aria-label="更多工具"
        className="mt-auto flex h-9 w-7 items-center justify-center gap-[3px] border-t border-[#dfe2e7]"
      >
        <span className="size-[3px] rounded-full border border-[#5c6370]" />
        <span className="size-[3px] rounded-full border border-[#5c6370]" />
        <span className="size-[3px] rounded-full border border-[#5c6370]" />
      </button>
    </div>
  );
}

function StatusBar() {
  const [scale, setScale] = useState(50);

  return (
    <footer className="flex h-6 shrink-0 items-center border-t border-[#dfe2e7] px-3 text-[#4a5160]">
      <button type="button" className="flex items-center gap-1">
        <svg viewBox="0 0 12 12" className="size-3" fill="none" stroke="currentColor" aria-hidden="true">
          <path d="M.500.500h11v11H.500zM5 .500v11" />
        </svg>
        导航
      </button>
      <span className="ml-3 flex">
        <Divider />
      </span>
      <div className="ml-3.5 flex items-center text-[#a5abb6]">
        <button type="button" aria-label="首页">
          <Icon className="size-3">
            <path strokeWidth="1.500" d="M3 3v14M15 3l-8 7 8 7" />
          </Icon>
        </button>
        <button type="button" aria-label="上一页" className="ml-1">
          <ChevronLeft size={16} strokeWidth={1.4} />
        </button>
        <input
          type="text"
          aria-label="页码"
          defaultValue="1/1"
          className="ml-2.5 h-[18px] w-[92px] border border-[#e2e5ea] bg-white text-center text-xs text-[#3a404e]"
        />
        <button type="button" aria-label="下一页" className="ml-2.5">
          <ChevronRight size={16} strokeWidth={1.4} />
        </button>
        <button type="button" aria-label="末页" className="ml-1.5">
          <Icon className="size-3">
            <path strokeWidth="1.500" d="M17 3v14M5 3l8 7-8 7" />
          </Icon>
        </button>
      </div>
      <span className="ml-3 flex">
        <Divider />
      </span>
      <button type="button" aria-label="后退" className="ml-3">
        <Icon className="size-3">
          <path strokeWidth="1.700" d="M1 1h18v18H1zM5 10h10M9 6.500 5 10l4 3.500" />
        </Icon>
      </button>
      <button type="button" aria-label="前进" className="ml-2 text-[#b3b8c2]">
        <Icon className="size-3">
          <path strokeWidth="1.700" d="M1 1h18v18H1zM5 10h10M11 6.500l4 3.500-4 3.500" />
        </Icon>
      </button>
      <span className="ml-1 flex">
        <Divider />
      </span>

      <div className="ml-auto flex items-center">
        <button type="button" aria-label="护眼模式" className="flex items-center gap-1">
          <Icon className="size-[14px]">
            <path strokeWidth="1.400" d="M1 12q9-11 18 0-9 10-18 0zM10 1v3M4 3l1.500 2.500M16 3l-1.500 2.500" />
            <circle cx="10" cy="12" r="3" strokeWidth="1.400" />
          </Icon>
          <Caret />
        </button>
        <span className="mr-[10px] ml-3 flex">
          <Divider />
        </span>
        <button type="button" aria-label="连续阅读" className="text-[#a5abb6]">
          <Icon className="size-[14px]">
            <path strokeWidth="1.400" d="M1 1v6h18V1M1 19v-6h18v6" />
          </Icon>
        </button>
        <span className="mr-2 ml-3 flex">
          <Divider />
        </span>
        <button type="button" aria-label="单页" className="flex h-5 w-5 items-center justify-center bg-[#dae0e8] text-[#2f3542]">
          <Icon className="size-[13px]">
            <path strokeWidth="1.500" d="M2 1h12l4 4v14H2zM6 9h8M6 13h5" />
          </Icon>
        </button>
        <button type="button" aria-label="双页" className="ml-[5px] text-[#a5abb6]">
          <Icon className="size-[14px]">
            <path strokeWidth="1.400" d="M1 2h6l2 2v14H1zM11 2h6l2 2v14h-8zM3 8h4M3 12h4M13 8h4M13 12h4" />
          </Icon>
        </button>
        <span className="mx-3 flex">
          <Divider />
        </span>
        <button type="button" aria-label="播放" className="flex h-[15px] w-5 items-center justify-center rounded-[2px] bg-[#707a92]">
          <svg viewBox="0 0 6 8" className="h-2 w-1.5" fill="#fff" aria-hidden="true">
            <path d="M0 0v8l6-4z" />
          </svg>
        </button>
        <span className="mr-2 ml-3 flex">
          <Divider />
        </span>
        <button type="button" aria-label="实际大小" className="flex h-5 w-5 items-center justify-center bg-[#dae0e8] text-[#2f3542]">
          <svg viewBox="0 0 13 11" className="h-[11px] w-[13px]" fill="none" stroke="currentColor" aria-hidden="true">
            <path d="M.500.500h12v10H.500zM3 4l1-1v5M9 4l1-1v5M6.500 4v1M6.500 6.500v1" />
          </svg>
        </button>
        <button type="button" aria-label="适合页面" className="ml-1.5">
          <Icon className="size-[13px]">
            <path strokeWidth="1.500" d="M4 4h9l3 3v9H4zM1 4V1h3M16 1h3v3M19 16v3h-3M4 19H1v-3" />
          </Icon>
        </button>
        <button type="button" aria-label="适合宽度" className="ml-2">
          <Icon className="size-[13px]">
            <path strokeWidth="1.500" d="M3 14V1h10l4 4v9M1 18h18M3 15.500.500 18 3 20M17 15.500l2.500 2.500L17 20" />
          </Icon>
        </button>
        <button type="button" className="ml-1 flex items-center gap-[3px] text-[11px]">
          100%
          <Caret />
        </button>
        <button type="button" aria-label="缩小" className="ml-2">
          <Minus size={13} strokeWidth={2.5} />
        </button>
        <input
          type="range"
          aria-label="缩放"
          value={scale}
          onChange={(event) => setScale(Number(event.target.value))}
          className="mx-2 h-3 w-[112px] appearance-none bg-[linear-gradient(90deg,#7d8594_50%,#d5d9e0_50%)] bg-[length:100%_1px] bg-center bg-no-repeat [&::-webkit-slider-thumb]:size-[10px] [&::-webkit-slider-thumb]:appearance-none [&::-webkit-slider-thumb]:rounded-full [&::-webkit-slider-thumb]:border [&::-webkit-slider-thumb]:border-[#5c6370] [&::-webkit-slider-thumb]:bg-white"
        />
        <button type="button" aria-label="放大" className="ml-0.5 text-[#20242e]">
          <Plus size={13} strokeWidth={2.5} />
        </button>
        <button type="button" aria-label="全屏" className="ml-2">
          <Icon className="size-3">
            <path strokeWidth="1.800" d="M2 7V2h5M2 2l5 5M18 7V2h-5M18 2l-5 5M2 13v5h5M2 18l5-5M18 13v5h-5M18 18l-5-5" />
          </Icon>
        </button>
      </div>
    </footer>
  );
}

function SpeedWidget() {
  return (
    <div className="absolute right-6 bottom-[50px] z-10 flex items-center font-['Liberation_Sans',sans-serif]">
      <div className="-mr-[26px] flex h-[34px] w-[76px] flex-col justify-between rounded-l-full bg-[#2c313e] py-0.5 pr-[29px] pl-2 text-[10px] leading-[13px] text-white shadow-md">
        <div className="flex items-center justify-between whitespace-nowrap">
          <svg viewBox="0 0 6 6" className="size-1.5 shrink-0" fill="#3fa9e8" aria-hidden="true">
            <path d="m3 0 3 3H4v3H2V3H0z" />
          </svg>
          <span>
            0<span className="text-[8px] text-[#8c92a0]">K/s</span>
          </span>
        </div>
        <div className="flex items-center justify-between whitespace-nowrap">
          <svg viewBox="0 0 6 6" className="size-1.5 shrink-0" fill="#3fae4f" aria-hidden="true">
            <path d="m3 6 3-3H4V0H2v3H0z" />
          </svg>
          <span>
            0.4<span className="text-[8px] text-[#8c92a0]">K/s</span>
          </span>
        </div>
      </div>
      <div className="relative flex size-[50px] items-center justify-center rounded-full bg-[#4b4f5e] text-[20px] text-white shadow-[0_0_4px_rgba(0,0,0,0.6)]">
        <svg viewBox="0 0 50 50" className="absolute inset-0" fill="none" strokeWidth="1.500" aria-hidden="true">
          <path d="M25 4a21 21 0 0 1 18 32" stroke="#3ec6b4" />
          <path d="M43 36A21 21 0 0 1 5 33" stroke="#c8c552" />
        </svg>
        69<span className="mt-2 text-[9px]">%</span>
      </div>
    </div>
  );
}

function SiteMark() {
  return (
    <div className="pointer-events-none absolute right-[10px] bottom-[5px] z-10 flex items-start gap-px">
      <svg viewBox="0 0 44 40" className="h-10 w-11" aria-hidden="true">
        <defs>
          <linearGradient id="swoosh-green" x1="0" y1="1" x2="1" y2="0">
            <stop offset="0" stopColor="#d6dc4e" />
            <stop offset="1" stopColor="#3fae6c" />
          </linearGradient>
        </defs>
        <path d="M43 2C22-2 0 11 1 24c1 7 7 8 12 6-6-1-7-6-3-12C16 8 27 3 43 2z" fill="#4a93d6" />
        <path d="M32 6C20 7 11 15 14 21c3 5 12 2 12 8 0 3-3 5-5 6 7-3 11-9 7-13-3-3-8-2-8-7 0-4 6-7 12-9z" fill="#57a5de" />
        <path d="M4 37c16 5 36-2 38-13 0-5-4-8-10-7 5 4 1 10-5 14-6 5-14 7-23 6z" fill="url(#swoosh-green)" />
      </svg>
      <div className="flex flex-col">
        <span className="text-[21px] leading-6 font-bold text-[#5290cf]">极光下载站</span>
        <span className="font-['Liberation_Sans',sans-serif] text-base leading-5 font-bold text-[#6cc472]">
          www.xz7.com
        </span>
      </div>
    </div>
  );
}

export default function App() {
  return (
    <div className="relative flex min-h-screen flex-col overflow-hidden bg-[#f5f7fa] font-['Noto_Sans','Noto_Sans_CJK_SC',sans-serif] text-[10px]">
      <TitleBar />
      <MenuRow />
      <Ribbon />
      <div className="flex flex-1">
        <LeftRail />
        <ThumbnailPanel />
        <main className="relative flex min-w-0 flex-1 justify-center">
          <DocumentPage />
          <button
            type="button"
            aria-label="转换文档"
            className="absolute top-[10px] right-1 flex size-[23px] items-center justify-center rounded-full bg-[#3cb043] text-white"
          >
            <Icon className="size-[13px]">
              <path strokeWidth="1.800" d="M6 10V2h12v14h-8M15 5.500H9.500V9H15v3.500h-5M2 11v6h5M4.500 14.500 7 17l-2.500 2.500" />
            </Icon>
          </button>
        </main>
        <div className="flex w-3 shrink-0 flex-col items-center bg-[#e9ebf1] py-2">
          <svg viewBox="0 0 5 3" className="h-[3px] w-[5px]" fill="#8b93a5" aria-hidden="true">
            <path d="M0 3h5L2.500 0z" />
          </svg>
          <div className="mt-[167px] mb-2 w-[10px] flex-1 rounded-full bg-[#d3d6df]" />
          <Caret />
        </div>
        <PropertiesPanel />
        <RightRail />
      </div>
      <StatusBar />
      <SpeedWidget />
      <SiteMark />
    </div>
  );
}
